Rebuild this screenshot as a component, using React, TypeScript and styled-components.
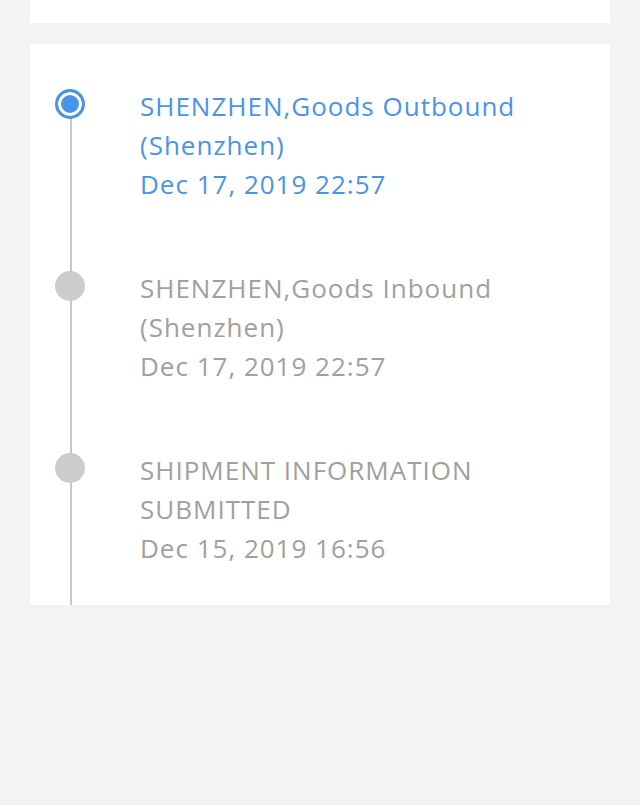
import React from "react";
import styled, { createGlobalStyle } from "styled-components";

const GlobalStyle = createGlobalStyle`
  html, body {
    margin: 0;
    padding: 0;
    background: #f3f3f3;
  }
  body {
    font-family: "Open Sans", "Noto Sans", sans-serif;
  }
`;

type Step = { title: string; time: string };

const steps: Step[] = [
  { title: "SHENZHEN,Goods Outbound (Shenzhen)", time: "Dec 17, 2019 22:57" },
  { title: "SHENZHEN,Goods Inbound (Shenzhen)", time: "Dec 17, 2019 22:57" },
  { title: "SHIPMENT INFORMATION SUBMITTED", time: "Dec 15, 2019 16:56" }
];

const Page = styled.div`
  min-height: 805px;
  padding: 0 30px;
  display: flex;
  flex-direction: column;
  gap: 21px;
`;

const TopCard = styled.div`
  height: 23px;
  background: #fff;
`;

const Card = styled.div`
  background: #fff;
  padding-bottom: 15px;
`;

const Item = styled.div<{ $first: boolean }>`
  position: relative;
  display: flex;
  padding: 43px 0 22px 25px;

  &::before {
    content: "";
    position: absolute;
    left: 40px;
    width: 2px;
    top: ${(p) => (p.$first ? "60px" : "0")};
    bottom: -15px;
    background: #c8c8c8;
  }
  &:not(:last-child)::before {
    bottom: 0;
  }
`;

const Dot = styled.div<{ $active: boolean }>`
  position: relative;
  z-index: 1;
  flex: none;
  box-sizing: border-box;
  width: 30px;
  height: 30px;
  margin-top: 2px;
  border-radius: 50%;
  background: ${(p) => (p.$active ? "#4a94e8" : "#cccccc")};
  border: ${(p) => (p.$active ? "3px solid #4a94e8" : "none")};
  box-shadow: ${(p) => (p.$active ? "inset 0 0 0 3px #fff" : "none")};
`;

const Text = styled.div<{ $active: boolean }>`
  margin-left: 55px;
  font-size: 26px;
  line-height: 39px;
  letter-spacing: 1px;
  color: ${(p) => (p.$active ? "#4a94e8" : "#a0a0a0")};
  max-width: 420px;
`;

const App = () => (
  <>
    <GlobalStyle />
    <Page>
      <TopCard />
      <Card>
        {steps.map((s, i) => (
          <Item key={i} $first={i === 0}>
            <Dot $active={i === 0} />
            <Text $active={i === 0}>
              <div>{s.title}</div>
              <div>{s.time}</div>
            </Text>
          </Item>
        ))}
      </Card>
    </Page>
  </>
);

export default App;
